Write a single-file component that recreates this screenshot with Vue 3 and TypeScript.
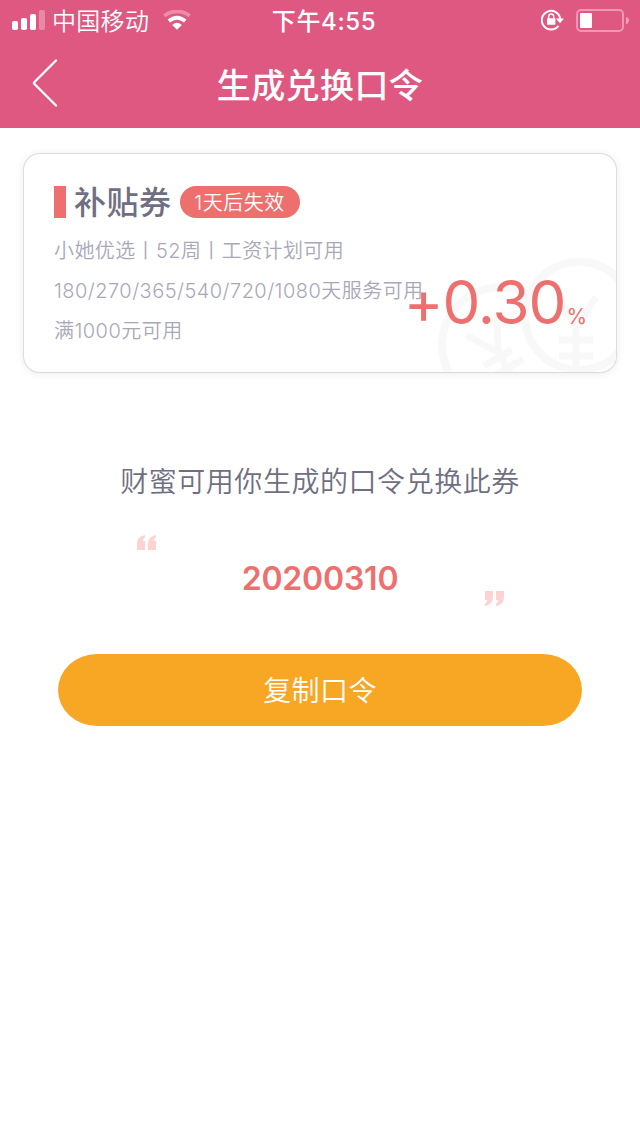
<script setup lang="ts">
const conditions: string[] = [
  '小她优选丨52周丨工资计划可用',
  '180/270/365/540/720/1080天服务可用',
  '满1000元可用',
]
const code = '20200310'
</script>

<template>
  <div class="screen">
    <header class="header">
      <div class="status">
        <div class="status-left">
          <svg class="signal" width="34" height="20" viewBox="0 0 34 20" fill="#fff">
            <rect x="0" y="11" width="6" height="9" rx="1.8" />
            <rect x="9" y="8" width="6" height="12" rx="1.8" />
            <rect x="18" y="4" width="6" height="16" rx="1.8" />
            <rect x="27" y="0" width="6" height="20" rx="1.8" opacity="0.3" />
          </svg>
          <span class="carrier">中国移动</span>
          <svg class="wifi" width="28" height="20" viewBox="0 0 28 20">
            <path d="M1.2 5.8Q14-3.2 26.8 5.8" fill="none" stroke="#fff" stroke-opacity="0.32" stroke-width="3.6" />
            <path d="M5.8 11Q14 4.4 22.2 11" fill="none" stroke="#fff" stroke-width="3.8" />
            <path d="M9.2 15Q14 10.6 18.8 15L14 19.8Z" fill="#fff" />
          </svg>
        </div>
        <span class="time">下午4:55</span>
        <div class="status-right">
          <svg class="lock" width="24" height="22" viewBox="0 0 24 22">
            <path d="M17.5 16.8A9.3 9.3 0 1 1 19.3 10" fill="none" stroke="#fff" stroke-width="2" />
            <path d="M14.8 9.5H23L19 14.3Z" fill="#fff" />
            <rect x="6" y="9.3" width="8.4" height="6.5" rx="0.8" fill="#fff" />
            <path d="M7.7 9.8V7.5a2.5 2.5 0 0 1 5 0v2.3" fill="none" stroke="#fff" stroke-width="1.4" />
          </svg>
          <svg class="battery" width="54" height="24" viewBox="0 0 54 24">
            <rect x="1" y="2" width="46" height="21" rx="4" fill="none" stroke="#fff" stroke-opacity="0.4" stroke-width="2" />
            <rect x="4" y="5" width="12" height="15" rx="1" fill="#fff" />
            <path d="M50 9Q53 10 53 12.5T50 16.5Z" fill="#fff" fill-opacity="0.45" />
          </svg>
        </div>
      </div>
      <div class="nav">
        <svg class="back" width="28" height="50" viewBox="0 0 28 50">
          <path d="M24 2.5L2.5 24Q1.5 25 2.5 26L24 47.5" fill="none" stroke="#fff" stroke-width="2.3" stroke-linecap="round" />
        </svg>
        <h1 class="title">生成兑换口令</h1>
      </div>
    </header>

    <section class="card">
      <svg class="coins" width="180" height="116" viewBox="436 256 180 116" fill="none" stroke="#f8f8f8">
        <path d="M526 293.2A58 58 0 0 0 451 376" stroke-width="8" />
        <circle cx="579" cy="316" r="54" stroke-width="8" />
        <path d="M558 297L576 329L596 297M576 329V370M559 340H593M559 356H593" stroke-width="7" />
        <path d="M466 335L498 352L497 312M498 352L512 377M484 366L512 350M490 378L523 359" stroke-width="7" />
      </svg>
      <div class="card-head">
        <span class="marker"></span>
        <h2 class="card-title">补贴券</h2>
        <span class="pill">1天后失效</span>
      </div>
      <p v-for="line in conditions" :key="line" class="condition">{{ line }}</p>
      <div class="amount"><span class="value">+0.30</span><span class="percent">%</span></div>
    </section>

    <main class="share">
      <p class="hint">财蜜可用你生成的口令兑换此券</p>
      <div class="code-box">
        <svg class="quote" width="20" height="17" viewBox="0 0 20 17" fill="#fdd3d2">
          <path d="M8 1V3Q6 4.5 5.8 7H8V16H0V10Q0 2.5 8 1Z" />
          <path d="M19 1V3Q17 4.5 16.8 7H19V16H11V10Q11 2.5 19 1Z" />
        </svg>
        <strong class="code">{{ code }}</strong>
        <svg class="quote quote-end" width="20" height="17" viewBox="0 0 20 17" fill="#fdd3d2">
          <path d="M0 16V14Q2 12.5 2.2 10H0V1H8V7Q8 14.5 0 16Z" />
          <path d="M11 16V14Q13 12.5 13.2 10H11V1H19V7Q19 14.5 11 16Z" />
        </svg>
      </div>
      <button class="copy" type="button">复制口令</button>
    </main>
  </div>
</template>

<style>
body {
  background: #fff;
}
</style>

<style scoped>
.screen {
  width: 640px;
  height: 1136px;
  overflow: hidden;
  background: #fff;
  font-family: Inter, "Noto Sans CJK SC", sans-serif;
}
h1, h2, p {
  margin: 0;
}
svg {
  display: block;
  flex: none;
}
.header {
  height: 128px;
  background: #df5881;
  color: #fff;
}
.status {
  display: grid;
  grid-template-columns: 1fr auto 1fr;
  height: 40px;
  align-items: center;
}
.status-left, .status-right {
  display: flex;
  align-items: center;
  height: 40px;
}
.status-left {
  padding-left: 12px;
}
.carrier {
  margin-left: 6px;
  padding-top: 3px;
  font-size: 24px;
  line-height: 40px;
  letter-spacing: 0.3px;
  font-weight: 350;
}
.wifi {
  margin-left: 14px;
}
.time {
  padding: 3px 0 0 8px;
  font-size: 24px;
  font-weight: 500;
  line-height: 37px;
  letter-spacing: 0.6px;
}
.status-right {
  justify-content: flex-end;
  padding-right: 10px;
}
.lock {
  margin-right: -1px;
}
.battery {
  margin-left: 12px;
}
.nav {
  display: grid;
  grid-template-columns: 60px 1fr 60px;
  height: 88px;
  align-items: center;
}
.back {
  margin: -2px 0 0 32px;
}
.title {
  padding-top: 4px;
  text-align: center;
  font-size: 34px;
  font-weight: 500;
  letter-spacing: 0.4px;
  line-height: 84px;
}
.card {
  position: relative;
  box-sizing: border-box;
  width: 592px;
  height: 218px;
  margin: 26px 24px 0;
  padding: 28px 30px 0;
  border-radius: 16px;
  background: #fff;
  box-shadow: 0 0 1px 1px rgba(0, 0, 0, 0.11), 0 1px 10px rgba(0, 0, 0, 0.09);
  overflow: hidden;
}
.coins {
  position: absolute;
  right: 0;
  bottom: 0;
}
.card-head {
  display: flex;
  align-items: center;
  height: 40px;
  margin-bottom: 8px;
}
.marker {
  width: 12px;
  height: 32px;
  background: #ee706e;
}
.card-title {
  margin-left: 8px;
  padding-top: 1px;
  color: #706f82;
  font-size: 32px;
  font-weight: 500;
  line-height: 39px;
  letter-spacing: 0.5px;
}
.pill {
  box-sizing: border-box;
  width: 120px;
  height: 32px;
  margin-left: 8px;
  padding-top: 1px;
  border-radius: 16px;
  background: #ee706e;
  color: #fff;
  font-size: 20px;
  font-weight: 350;
  line-height: 32px;
  letter-spacing: 0.5px;
  text-align: center;
}
.condition {
  position: relative;
  color: #a9a8b9;
  font-size: 20px;
  font-weight: 350;
  line-height: 40px;
  letter-spacing: 0.46px;
  white-space: nowrap;
}
.condition:first-of-type {
  padding-top: 1px;
  letter-spacing: 0.4px;
}
.amount {
  position: absolute;
  right: 29px;
  top: 112px;
  display: flex;
  align-items: baseline;
  color: #ee706e;
  line-height: 72px;
}
.value {
  font-size: 60px;
  letter-spacing: -1px;
}
.percent {
  margin-left: 1px;
  font-size: 21px;
}
.share {
  padding-top: 88px;
}
.hint {
  color: #706f82;
  font-size: 28px;
  font-weight: 350;
  line-height: 44px;
  letter-spacing: 0.55px;
  text-align: center;
}
.code-box {
  display: flex;
  justify-content: space-between;
  width: 368px;
  height: 75px;
  margin: 30px 0 0 137px;
}
.code {
  margin-left: -2px;
  padding-top: 21px;
  color: #ee706e;
  font-size: 32px;
  font-weight: 600;
  line-height: 48px;
  letter-spacing: -0.2px;
}
.quote-end {
  margin-top: 56px;
}
.copy {
  display: block;
  box-sizing: border-box;
  width: 524px;
  height: 72px;
  margin: 45px auto 0;
  padding: 2px 0 0;
  border: 0;
  border-radius: 39px / 36px;
  background: #f7a724;
  color: #fff;
  font-family: inherit;
  font-size: 28px;
  font-weight: 350;
  letter-spacing: 0.4px;
  line-height: 70px;
}
</style>
